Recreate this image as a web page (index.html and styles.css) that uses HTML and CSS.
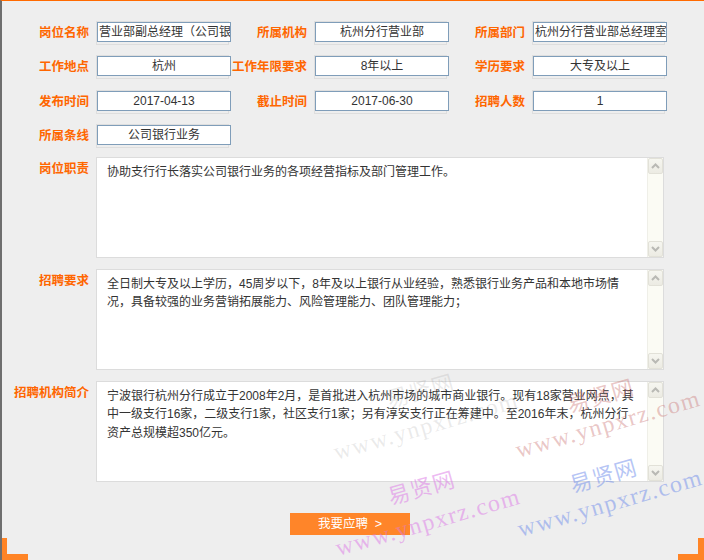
FILE: index.html
```html
<!DOCTYPE html>
<html lang="zh-CN">
<head>
<meta charset="utf-8">
<title>招聘岗位详情</title>
<link rel="stylesheet" href="styles.css">
</head>
<body>
<div class="page">
  <div class="grid">
    <div class="lbl">岗位名称</div>
    <div class="cell"><div class="fld">营业部副总经理（公司银</div></div>
    <div class="lbl">所属机构</div>
    <div class="cell"><div class="fld">杭州分行营业部</div></div>
    <div class="lbl">所属部门</div>
    <div class="cell"><div class="fld">杭州分行营业部总经理室</div></div>

    <div class="lbl">工作地点</div>
    <div class="cell"><div class="fld">杭州</div></div>
    <div class="lbl">工作年限要求</div>
    <div class="cell"><div class="fld">8年以上</div></div>
    <div class="lbl">学历要求</div>
    <div class="cell"><div class="fld">大专及以上</div></div>

    <div class="lbl">发布时间</div>
    <div class="cell"><div class="fld">2017-04-13</div></div>
    <div class="lbl">截止时间</div>
    <div class="cell"><div class="fld">2017-06-30</div></div>
    <div class="lbl">招聘人数</div>
    <div class="cell"><div class="fld">1</div></div>

    <div class="lbl">所属条线</div>
    <div class="cell"><div class="fld">公司银行业务</div></div>
  </div>

  <div class="areas">
    <div class="arow">
      <div class="lbl top">岗位职责</div>
      <div class="ta">
        <div class="ta-text">协助支行行长落实公司银行业务的各项经营指标及部门管理工作。</div>
        <div class="sb">
          <span class="sbtn"><svg width="9" height="6" viewBox="0 0 9 6"><polyline points="1,5 4.5,1.5 8,5" fill="none" stroke="#b9b9b4" stroke-width="2"/></svg></span>
          <span class="strack"></span>
          <span class="sbtn"><svg width="9" height="6" viewBox="0 0 9 6"><polyline points="1,1 4.5,4.5 8,1" fill="none" stroke="#b9b9b4" stroke-width="2"/></svg></span>
        </div>
      </div>
    </div>
    <div class="arow">
      <div class="lbl top">招聘要求</div>
      <div class="ta">
        <div class="ta-text">全日制大专及以上学历，45周岁以下，8年及以上银行从业经验，熟悉银行业务产品和本地市场情<br>况，具备较强的业务营销拓展能力、风险管理能力、团队管理能力；</div>
        <div class="sb">
          <span class="sbtn"><svg width="9" height="6" viewBox="0 0 9 6"><polyline points="1,5 4.5,1.5 8,5" fill="none" stroke="#b9b9b4" stroke-width="2"/></svg></span>
          <span class="strack"></span>
          <span class="sbtn"><svg width="9" height="6" viewBox="0 0 9 6"><polyline points="1,1 4.5,4.5 8,1" fill="none" stroke="#b9b9b4" stroke-width="2"/></svg></span>
        </div>
      </div>
    </div>
    <div class="arow">
      <div class="lbl top">招聘机构简介</div>
      <div class="ta">
        <div class="ta-text">宁波银行杭州分行成立于2008年2月，是首批进入杭州市场的城市商业银行。现有18家营业网点，其<br>中一级支行16家，二级支行1家，社区支行1家；另有淳安支行正在筹建中。至2016年末，杭州分行<br>资产总规模超350亿元。</div>
        <div class="sb">
          <span class="sbtn"><svg width="9" height="6" viewBox="0 0 9 6"><polyline points="1,5 4.5,1.5 8,5" fill="none" stroke="#b9b9b4" stroke-width="2"/></svg></span>
          <span class="strack"></span>
          <span class="sbtn"><svg width="9" height="6" viewBox="0 0 9 6"><polyline points="1,1 4.5,4.5 8,1" fill="none" stroke="#b9b9b4" stroke-width="2"/></svg></span>
        </div>
      </div>
    </div>
  </div>

  <div class="actions"><span class="btn">我要应聘 &nbsp;&gt;</span></div>

  <div class="corners"><span class="corner cl"></span><span class="corner cr"></span></div>

  <div class="wm wm-gray wm-logo" style="left:418px;top:388px">易贤网</div>
  <div class="wm wm-gray wm-url" style="left:424px;top:425px">www.ynpxrz.com</div>
  <div class="wm wm-red wm-logo" style="left:598px;top:393px">易贤网</div>
  <div class="wm wm-red wm-url" style="left:606px;top:423px">www.ynpxrz.com</div>
  <div class="wm wm-pink wm-logo" style="left:419px;top:485px">易贤网</div>
  <div class="wm wm-pink wm-url" style="left:426px;top:521px">www.ynpxrz.com</div>
  <div class="wm wm-blue wm-logo" style="left:601px;top:473px">易贤网</div>
  <div class="wm wm-blue wm-url" style="left:608px;top:502px">www.ynpxrz.com</div>
</div>
</body>
</html>
```

FILE: styles.css
```css
* { box-sizing: border-box; }

html, body {
  margin: 0;
  padding: 0;
  background: #eeeeee;
}

body {
  font-family: "Liberation Sans", "Noto Sans CJK SC", sans-serif;
  font-size: 12px;
  color: #333333;
}

.page {
  position: relative;
  width: 704px;
  height: 560px;
  border-top: 1px solid #ff6a00;
  border-left: 2px solid #6e6e6e;
  display: flex;
  flex-direction: column;
  overflow: hidden;
}

.grid {
  margin-top: 20px;
  display: grid;
  grid-template-columns: 94px 133px 85px 133px 85px 133px;
  grid-auto-rows: 24px;
  row-gap: 10.3px;
}

.lbl {
  font-size: 12.5px;
  font-weight: bold;
  color: #ff6600;
  text-align: right;
  padding-right: 7px;
  white-space: nowrap;
  line-height: 18px;
  align-self: center;
}

.lbl.top {
  align-self: start;
  padding-top: 3px;
}

.cell {
  border: 1px solid #dedede;
  height: 24px;
}

.fld {
  width: 134px;
  height: 20px;
  border: 1px solid #7f9db9;
  background: #ffffff;
  line-height: 18px;
  font-size: 12px;
  color: #333333;
  text-align: center;
  white-space: nowrap;
  overflow: hidden;
  padding: 0 1px;
}

.areas {
  margin-top: 9px;
  display: flex;
  flex-direction: column;
  gap: 11px;
}

.arow {
  display: grid;
  grid-template-columns: 94px 568px;
}

.ta {
  height: 101px;
  border: 1px solid #dcdcdc;
  background: #ffffff;
  display: flex;
}

.ta-text {
  flex: 1;
  padding: 5px 0 0 10px;
  font-size: 12px;
  line-height: 18.5px;
  color: #333333;
  white-space: nowrap;
  overflow: hidden;
}

.sb {
  width: 16px;
  display: flex;
  flex-direction: column;
  background: #fbfbf4;
  border-left: 1px solid #efefe8;
}

.sbtn {
  height: 16px;
  width: 15px;
  border: 1px solid #e2e1d8;
  border-radius: 2px;
  background: linear-gradient(#f6f6f0, #ecebe3);
  display: flex;
  align-items: center;
  justify-content: center;
}

.strack {
  flex: 1;
}

.actions {
  margin-top: 31px;
  display: flex;
  justify-content: flex-start;
  padding-left: 288px;
}

.btn {
  width: 120px;
  height: 22px;
  line-height: 22px;
  background: #ff8529;
  color: #ffffff;
  font-size: 12.5px;
  text-align: center;
  white-space: nowrap;
}

.corners {
  margin-top: auto;
  display: flex;
  justify-content: space-between;
}

.corner {
  width: 26px;
  height: 22px;
  border-bottom: 6px solid #ff8426;
}

.corner.cl {
  border-left: 5px solid #ff8426;
}

.corner.cr {
  border-right: 6px solid #ff8426;
}

/* watermarks overlaid on the page */
.wm {
  position: absolute;
  transform: translate(-50%, -50%) rotate(-16deg);
  white-space: nowrap;
  pointer-events: none;
}

.wm-logo {
  font-family: "Noto Sans CJK SC", sans-serif;
  font-size: 22px;
  line-height: 24px;
  letter-spacing: 1px;
}

.wm-url {
  font-family: "Liberation Serif", serif;
  font-size: 24px;
  line-height: 26px;
  letter-spacing: 1.5px;
}

.wm-gray { color: rgba(160, 160, 160, 0.22); }
.wm-red { color: rgba(200, 110, 110, 0.4); }
.wm-pink { color: rgba(220, 120, 230, 0.5); }
.wm-blue { color: rgba(110, 140, 235, 0.5); }
```
